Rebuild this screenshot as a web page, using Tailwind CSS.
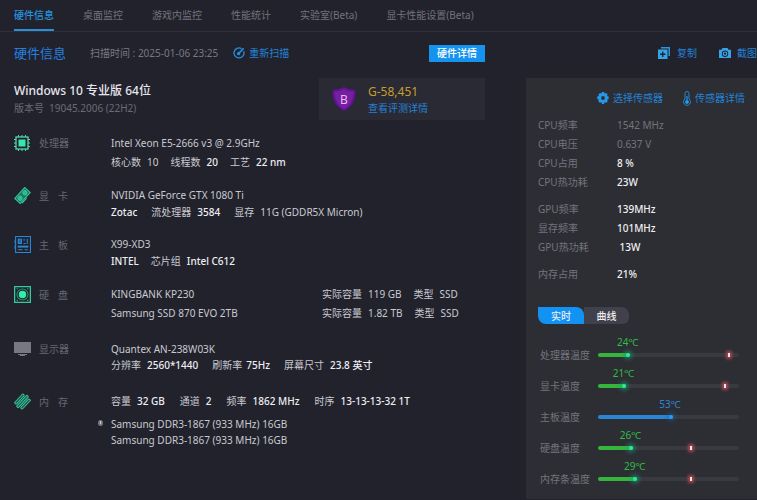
<!DOCTYPE html>
<html lang="zh-CN">
<head>
<meta charset="utf-8">
<meta name="viewport" content="width=device-width, initial-scale=1">
<title>硬件信息</title>
<script src="https://cdn.jsdelivr.net/npm/@tailwindcss/browser@4"></script>
</head>
<body class="min-h-screen bg-[#22222c] font-['Noto_Sans','Noto_Sans_CJK_SC',sans-serif] text-[10px] leading-4 text-[#c9cad1] overflow-x-hidden">
<nav class="flex h-8 gap-[29px] border-b border-[#30303b] pl-[14px] whitespace-nowrap text-[#72737d]">
  <a href="#" aria-current="page" class="flex items-center border-b-2 border-[#2c8fd6] font-medium text-[#2793df]">硬件信息</a>
  <a href="#" class="flex items-center border-b-2 border-transparent">桌面监控</a>
  <a href="#" class="flex items-center border-b-2 border-transparent">游戏内监控</a>
  <a href="#" class="flex items-center border-b-2 border-transparent">性能统计</a>
  <a href="#" class="flex items-center border-b-2 border-transparent">实验室(Beta)</a>
  <a href="#" class="flex items-center border-b-2 border-transparent">显卡性能设置(Beta)</a>
</nav>

<div class="grid grid-cols-[526fr_231fr]">
  <main class="pl-[14px]">
    <header class="flex h-[42px] items-center pr-[41px] whitespace-nowrap">
      <h1 class="text-[13px] text-[#2380e0]">硬件信息</h1>
      <p class="ml-6 text-[#777883]">扫描时间 : 2025-01-06 23:25</p>
      <button type="button" class="ml-[15px] flex items-center gap-1 text-[#2382d6]">
        <svg class="size-3" viewBox="0 0 12 12" fill="none" stroke="#2490e0" stroke-width="1.3"><path d="M8.500 1.600A5 5 0 1 0 10.700 4.200"/><path d="M5.500 6.800 10.600 1.400" stroke-width="1.600"/><circle cx="5.600" cy="6.600" r="1" fill="#2490e0"/></svg>
        重新扫描
      </button>
      <button type="button" class="ml-auto h-[17px] w-14 bg-[#1494ee] font-medium text-white">硬件详情</button>
    </header>

    <section class="flex items-start justify-between pt-1 pr-[41px] whitespace-nowrap">
      <div class="pt-1">
        <h2 class="text-xs leading-[18px] font-medium text-[#e6e6ec]">Windows 10 专业版 64位</h2>
        <p class="text-[#6a6b75]">版本号&ensp;19045.2006 (22H2)</p>
      </div>
      <div class="flex h-[42px] w-[166px] items-center gap-3 bg-[#292a33] pl-[13px]">
        <svg class="h-[26px] w-6" viewBox="0 0 24 26"><path d="M12 1C8.500 3 4.500 4 .5 4C.5 13 3 20.500 12 25C21 20.500 23.500 13 23.500 4C19.500 4 15.500 3 12 1Z" fill="#65119b"/><path d="M12 3C9 5 6 5.500 2.500 5.500C3 13 5 19 12 23C19 19 21 13 21.500 5.500C18 5.500 15 5 12 3Z" fill="#74209f"/><text x="12" y="18" text-anchor="middle" font-size="12" fill="#f0b8f5">B</text></svg>
        <div class="pt-px">
          <p class="text-xs leading-4 text-[#c79d32]">G-58,451</p>
          <a href="#" class="block text-[#2382d6]">查看评测详情</a>
        </div>
      </div>
    </section>

    <dl class="grid grid-cols-[25px_72px_1fr] pt-[15px] whitespace-nowrap">
      <dt class="col-span-2 grid grid-cols-subgrid self-start items-center text-[#666771]">
        <svg class="size-4" viewBox="0 0 16 16" fill="none" stroke="#58d5ae"><rect x="2" y="2" width="12" height="12" stroke-width="1.300"/><path d="M4.500 0V2M8 0V2M11.500 0V2M4.500 14V16M8 14V16M11.500 14V16M0 4.500H2M0 8H2M0 11.500H2M14 4.500H16M14 8H16M14 11.500H16"/><rect x="5" y="5" width="6" height="6" fill="#32e8ac" stroke="#32e8ac"/></svg>
        处理器
      </dt>
      <dd class="mb-[17px]">
        <p>Intel Xeon E5-2666 v3 @ 2.9GHz</p>
        <p class="mt-[3px] flex gap-3"><span class="flex gap-1.5"><span>核心数</span><span>10</span></span><span class="flex gap-1.5"><span>线程数</span><b class="font-medium text-[#ededf2]">20</b></span><span class="flex gap-1.5"><span>工艺</span><b class="font-medium text-[#ededf2]">22 nm</b></span></p>
      </dd>

      <dt class="col-span-2 grid grid-cols-subgrid self-start items-center text-[#666771]">
        <svg class="size-[17px]" viewBox="0 0 16 16" fill="none" stroke="#33c59b"><g transform="rotate(-48 8 8)"><rect x="1" y="4.500" width="14" height="7" fill="#22765f"/><circle cx="4.600" cy="8" r="1.900" fill="#2dbb8e"/><circle cx="11.400" cy="8" r="1.900" fill="#2dbb8e"/><path d="M2.500 12.500H9"/></g></svg>
        <span class="flex gap-[9px]"><span>显</span><span>卡</span></span>
      </dt>
      <dd class="mb-4">
        <p>NVIDIA GeForce GTX 1080 Ti</p>
        <p class="mt-px flex gap-[14px]"><b class="font-medium text-[#ededf2]">Zotac</b><span class="flex gap-1.5"><span>流处理器</span><b class="font-medium text-[#ededf2]">3584</b></span><span class="flex gap-1.5"><span>显存</span><span>11G (GDDR5X Micron)</span></span></p>
      </dd>

      <dt class="col-span-2 grid grid-cols-subgrid self-start items-center text-[#666771]">
        <svg class="size-[17px]" viewBox="0 0 16 16" fill="none" stroke="#2888d8"><path d="M1.500 .5H15.500V15.500H1.500Z"/><path d="M0 4V7M0 9V12"/><rect x="4" y="3" width="3" height="4" fill="#1c65a9"/><path d="M9.500 2.500V4.500M12.500 2.500V7.500M9 7H11"/><path d="M3.500 10H13.500" stroke-width="1.800"/><path d="M4 13H8M10 13H13"/></svg>
        <span class="flex gap-[9px]"><span>主</span><span>板</span></span>
      </dt>
      <dd class="mb-[17px]">
        <p>X99-XD3</p>
        <p class="mt-px flex gap-3"><b class="font-medium text-[#ededf2]">INTEL</b><span class="flex gap-1.5"><span>芯片组</span><b class="font-medium text-[#ededf2]">Intel C612</b></span></p>
      </dd>

      <dt class="col-span-2 grid grid-cols-subgrid self-start items-center text-[#666771]">
        <svg class="size-[17px]" viewBox="0 0 16 16" fill="none" stroke="#35c99d"><rect x=".6" y=".6" width="14.800" height="14.800" stroke-width="1.200"/><circle cx="8" cy="8" r="5.200" stroke="#22966f"/><circle cx="8" cy="8" r="3" fill="#30efac" stroke="#30efac"/><path d="M2.500 2.500H3.500M12.500 2.500H13.500M2.500 13.500H3.500M12.500 13.500H13.500"/></svg>
        <span class="flex gap-[9px]"><span>硬</span><span>盘</span></span>
      </dt>
      <dd class="mb-5 grid grid-cols-[211px_1fr] gap-y-[3px]">
        <span>KINGBANK KP230</span><span class="flex gap-3"><span class="flex gap-1.5"><span>实际容量</span><span>119 GB</span></span><span class="flex gap-1.5"><span>类型</span><span>SSD</span></span></span>
        <span>Samsung SSD 870 EVO 2TB</span><span class="flex gap-3"><span class="flex gap-1.5"><span>实际容量</span><span>1.82 TB</span></span><span class="flex gap-1.5"><span>类型</span><span>SSD</span></span></span>
      </dd>

      <dt class="col-span-2 grid grid-cols-subgrid self-start items-center text-[#666771]">
        <svg class="h-4 w-[17px]" viewBox="0 0 17 16" fill="#777882"><path d="M0 1H17V12H0ZM4 13H13V14H4ZM6 14H11V15H6Z"/></svg>
        显示器
      </dt>
      <dd class="mb-5">
        <p>Quantex AN-238W03K</p>
        <p class="flex gap-[14px]"><span class="flex gap-1.5"><span>分辨率</span><b class="font-medium text-[#ededf2]">2560*1440</b></span><span class="flex gap-1"><span>刷新率</span><b class="font-medium text-[#ededf2]">75Hz</b></span><span class="flex gap-1.5"><span>屏幕尺寸</span><b class="font-medium text-[#ededf2]">23.8 英寸</b></span></p>
      </dd>

      <dt class="col-span-2 grid grid-cols-subgrid self-start items-center text-[#666771]">
        <svg class="size-[17px]" viewBox="0 0 16 16" fill="#1d5a4d" stroke="#37c79d" stroke-width=".9"><g transform="rotate(-47 8 8)"><rect x="2" y="3.200" width="11.500" height="2.200" rx=".6"/><rect x=".8" y="6.900" width="14.400" height="2.200" rx=".6"/><rect x="2.500" y="10.600" width="11.500" height="2.200" rx=".6"/></g></svg>
        <span class="flex gap-[9px]"><span>内</span><span>存</span></span>
      </dt>
      <dd>
        <p class="flex gap-[15px]"><span class="flex gap-1.5"><span>容量</span><b class="font-medium text-[#ededf2]">32 GB</b></span><span class="flex gap-1.5"><span>通道</span><b class="font-medium text-[#ededf2]">2</b></span><span class="flex gap-1.5"><span>频率</span><b class="font-medium text-[#ededf2]">1862 MHz</b></span><span class="flex gap-1.5"><span>时序</span><b class="font-medium text-[#ededf2]">13-13-13-32 1T</b></span></p>
        <div class="mt-[7px] -ml-[13px] flex gap-2">
          <svg class="mt-1 h-[6px] w-[5px]" viewBox="0 0 5 6"><ellipse cx="2.500" cy="3" rx="2.500" ry="3" fill="#777882"/><path d="M2.500 1V4" stroke="#c9cad1"/></svg>
          <div><p>Samsung DDR3-1867 (933 MHz) 16GB</p><p>Samsung DDR3-1867 (933 MHz) 16GB</p></div>
        </div>
      </dd>
    </dl>
  </main>

  <aside class="whitespace-nowrap">
    <div class="flex h-[42px] items-center justify-end gap-[22px] text-[#2382d6]">
      <button type="button" class="flex items-center gap-[7px]">
        <svg class="size-3" viewBox="0 0 12 12"><path d="M3 0H12V9H10.500V1.500H3Z" fill="#2a97dc"/><path fill-rule="evenodd" d="M0 2.500H9.500V12H0ZM4.100 4.500V6.600H2V7.900H4.100V10H5.400V7.900H7.500V6.600H5.400V4.500Z" fill="#35a5e8"/></svg>
        复制
      </button>
      <button type="button" class="flex items-center gap-1.5">
        <svg class="size-3" viewBox="0 0 12 12"><path fill-rule="evenodd" d="M3.500 1H8.500L9.500 2.700H12V11H0V2.700H2.500ZM6 3.500A3.200 3.200 0 1 0 6 9.900A3.200 3.200 0 1 0 6 3.500Z" fill="#35a5e8"/><circle cx="6" cy="6.700" r="1.700" fill="none" stroke="#35a5e8" stroke-width="1.200"/></svg>
        截图
      </button>
    </div>

    <div class="mt-1 bg-[#2d2e33] pt-3 pr-3 pb-3 pl-3">
      <div class="flex justify-end gap-5 text-[#2382d6]">
        <button type="button" class="flex items-center gap-1">
          <svg class="size-3" viewBox="0 0 12 12"><path fill-rule="evenodd" d="M5 0H7L7.500 1.500L9 .9L10.600 2.400L10 3.900L11.600 4.600V7L10.200 7.600L10.700 9.200L9.200 10.700L7.600 10.200L7 12H5L4.400 10.200L2.800 10.700L1.300 9.200L1.800 7.600L.2 7V4.600L1.900 3.900L1.400 2.400L3 .9L4.500 1.500ZM6 4.100A1.900 1.900 0 1 0 6 7.900A1.900 1.900 0 1 0 6 4.100Z" fill="#2598e8"/></svg>
          选择传感器
        </button>
        <button type="button" class="flex items-center gap-1">
          <svg class="h-[15px] w-2" viewBox="0 0 8 15" fill="none" stroke="#2389cd"><path d="M2 8V2.500A2 2 0 0 1 6 2.500V8A3.500 3.500 0 1 1 2 8Z"/><path d="M4 5V11" stroke-width="1.400"/><circle cx="4" cy="11" r="1.600" fill="#28a2ee"/></svg>
          传感器详情
        </button>
      </div>

      <table class="mt-[9px] w-full text-left">
        <tbody class="text-[#73747d]">
          <tr class="h-[19px]"><th scope="row" class="w-[79px] font-normal">CPU频率</th><td>1542 MHz</td></tr>
          <tr class="h-[19px]"><th scope="row" class="font-normal">CPU电压</th><td>0.637 V</td></tr>
          <tr class="h-[19px]"><th scope="row" class="font-normal">CPU占用</th><td class="font-medium text-[#f0f0f4]">8 %</td></tr>
          <tr class="h-[19px]"><th scope="row" class="font-normal">CPU热功耗</th><td class="font-medium text-[#f0f0f4]">23W</td></tr>
        </tbody>
        <tbody class="text-[#73747d]">
          <tr class="h-[27px] align-bottom"><th scope="row" class="pb-px font-normal">GPU频率</th><td class="pb-px font-medium text-[#f0f0f4]">139MHz</td></tr>
          <tr class="h-[19px]"><th scope="row" class="font-normal">显存频率</th><td class="font-medium text-[#f0f0f4]">101MHz</td></tr>
          <tr class="h-[19px]"><th scope="row" class="font-normal">GPU热功耗</th><td class="font-medium text-[#f0f0f4]">&nbsp;13W</td></tr>
        </tbody>
        <tbody class="text-[#73747d]">
          <tr class="h-[27px] align-bottom"><th scope="row" class="pb-px font-normal">内存占用</th><td class="pb-px font-medium text-[#f0f0f4]">21%</td></tr>
        </tbody>
      </table>

      <div role="tablist" class="mt-6 flex font-medium text-[#ededf2]">
        <button type="button" role="tab" aria-selected="true" class="h-[17px] w-[46px] rounded-tr-lg rounded-bl-lg bg-[#1292f3]">实时</button>
        <button type="button" role="tab" aria-selected="false" class="h-[17px] w-[45px] rounded-tr-lg rounded-br-md bg-[#41414c]">曲线</button>
      </div>

      <div class="mt-2 grid auto-rows-[31px] grid-cols-[60px_1fr] pr-1.5 text-[#73747d]">
        <span id="t-cpu" class="self-end pl-0.5">处理器温度</span>
        <div class="relative mb-1.5 h-1 self-end rounded-full bg-[#393a40]" role="meter" aria-labelledby="t-cpu" aria-valuenow="24">
          <div class="relative h-1 rounded-full bg-[#35b53b]" style="width:23%">
            <span class="absolute right-0 bottom-[7px] translate-x-2 text-[#2ebc45]">24℃</span>
            <i class="absolute top-0 right-0 size-1 rounded-full bg-[#30e996] shadow-[0_0_4px_2px_#12aa7daa]"></i>
          </div>
          <i class="absolute top-0 h-1 w-0.5 bg-[#ffe4e4] shadow-[0_0_3px_2px_#c94d58bb]" style="left:92%"></i>
        </div>

        <span id="t-gpu" class="self-end pl-0.5">显卡温度</span>
        <div class="relative mb-1.5 h-1 self-end rounded-full bg-[#393a40]" role="meter" aria-labelledby="t-gpu" aria-valuenow="21">
          <div class="relative h-1 rounded-full bg-[#35b53b]" style="width:20%">
            <span class="absolute right-0 bottom-[7px] translate-x-2 text-[#2ebc45]">21℃</span>
            <i class="absolute top-0 right-0 size-1 rounded-full bg-[#30e996] shadow-[0_0_4px_2px_#12aa7daa]"></i>
          </div>
          <i class="absolute top-0 h-1 w-0.5 bg-[#ffe4e4] shadow-[0_0_3px_2px_#c94d58bb]" style="left:89.5%"></i>
        </div>

        <span id="t-board" class="self-end pl-0.5">主板温度</span>
        <div class="relative mb-1.5 h-1 self-end rounded-full bg-[#393a40]" role="meter" aria-labelledby="t-board" aria-valuenow="53">
          <div class="relative h-1 rounded-full bg-[#2a86d4]" style="width:53%">
            <span class="absolute right-0 bottom-[7px] translate-x-2 text-[#2a86d4]">53℃</span>
            <i class="absolute top-0 right-0 size-1 rounded-full bg-[#2b98f2] shadow-[0_0_4px_2px_#1266aa88]"></i>
          </div>
        </div>

        <span id="t-disk" class="self-end pl-0.5">硬盘温度</span>
        <div class="relative mb-1.5 h-1 self-end rounded-full bg-[#393a40]" role="meter" aria-labelledby="t-disk" aria-valuenow="26">
          <div class="relative h-1 rounded-full bg-[#35b53b]" style="width:25%">
            <span class="absolute right-0 bottom-[7px] translate-x-2 text-[#2ebc45]">26℃</span>
            <i class="absolute top-0 right-0 size-1 rounded-full bg-[#30e996] shadow-[0_0_4px_2px_#12aa7daa]"></i>
          </div>
          <i class="absolute top-0 h-1 w-0.5 bg-[#ffe4e4] shadow-[0_0_3px_2px_#c94d58bb]" style="left:65%"></i>
        </div>

        <span id="t-ram" class="self-end pl-0.5">内存条温度</span>
        <div class="relative mb-1.5 h-1 self-end rounded-full bg-[#393a40]" role="meter" aria-labelledby="t-ram" aria-valuenow="29">
          <div class="relative h-1 rounded-full bg-[#35b53b]" style="width:28%">
            <span class="absolute right-0 bottom-[7px] translate-x-2 text-[#2ebc45]">29℃</span>
            <i class="absolute top-0 right-0 size-1 rounded-full bg-[#30e996] shadow-[0_0_4px_2px_#12aa7daa]"></i>
          </div>
          <i class="absolute top-0 h-1 w-0.5 bg-[#ffe4e4] shadow-[0_0_3px_2px_#c94d58bb]" style="left:65%"></i>
        </div>
      </div>
    </div>
  </aside>
</div>
</body>
</html>
